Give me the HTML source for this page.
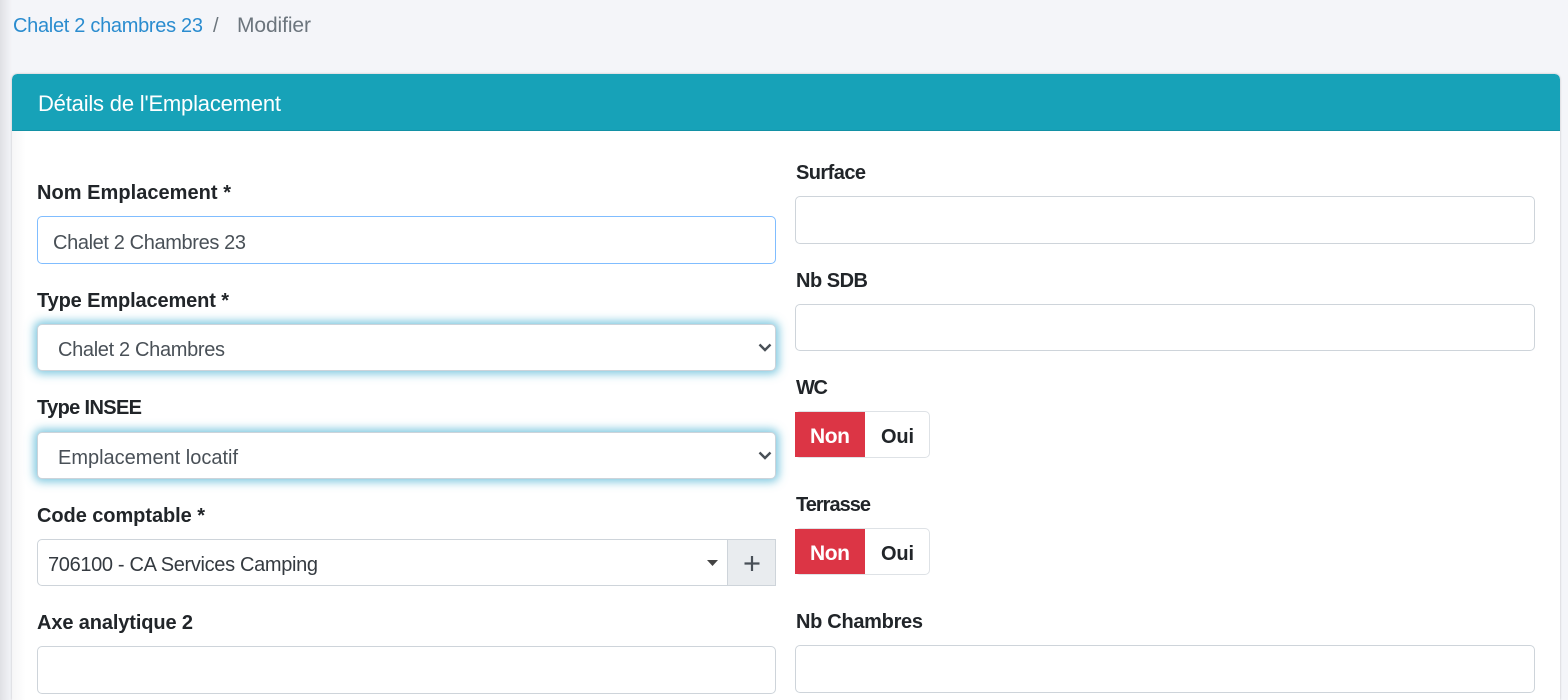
<!DOCTYPE html>
<html lang="fr">
<head>
<meta charset="utf-8">
<title>Modifier</title>
<style>
html,body{margin:0;padding:0;width:1568px;height:700px;overflow:hidden;background:#f4f5f9;font-family:"Liberation Sans",sans-serif}
body{position:relative}
.abs,.in{position:absolute;box-sizing:border-box}
.shadow{position:absolute;left:0;top:0;width:12px;height:700px;background:linear-gradient(to right,#dfe0e4,#e6e7eb 30%,#f4f5f9)}
.card{position:absolute;left:12px;top:74px;width:1548px;height:626px;background:#fff;border-radius:5px 5px 0 0;box-shadow:0 0 2px rgba(0,0,0,.22);overflow:hidden}
.cardfade{position:absolute;left:0;top:57px;width:14px;height:569px;background:linear-gradient(to right,#f6f6f7,#fff)}
.head{position:absolute;left:0;top:0;width:1548px;height:57px;background:#17a2b8;border-bottom:1px solid #1391a5;border-radius:5px 5px 0 0;box-sizing:border-box}
.in{background:#fff;border:1px solid #ced4da;border-radius:5px}
.blue{border-color:#80bdff}
.glow{border-color:#ccd3da;box-shadow:0 0 9px 3px rgba(70,175,210,.68)}
.non{position:absolute;background:#dc3545;width:70px;height:45px}
svg.t{position:absolute;left:0;top:0}
text{font-family:"Liberation Sans",sans-serif}
.b{font-weight:700;font-size:20px;fill:#212529}
.v{font-size:20px;fill:#495057}
</style>
</head>
<body>
<div class="shadow"></div>
<div class="card"><div class="cardfade"></div><div class="head"></div></div>

<div class="in blue" style="left:37px;top:216px;width:739px;height:48px"></div>
<div class="in glow" style="left:37px;top:324px;width:739px;height:47px"></div>
<div class="in glow" style="left:37px;top:432px;width:739px;height:47px"></div>
<div class="in" style="left:37px;top:539px;width:691px;height:47px;border-radius:5px 0 0 5px"></div>
<div class="in" style="left:727px;top:539px;width:49px;height:47px;border-radius:0;background:#e9ecef"></div>
<div class="in" style="left:37px;top:646px;width:739px;height:48px"></div>

<div class="in" style="left:795px;top:196px;width:740px;height:48px"></div>
<div class="in" style="left:795px;top:304px;width:740px;height:47px"></div>
<div class="in" style="left:795px;top:645px;width:740px;height:48px"></div>

<div class="in" style="left:795px;top:411px;width:135px;height:47px;border-color:#dee2e6"></div>
<div class="non" style="left:795px;top:412px"></div>
<div class="in" style="left:795px;top:528px;width:135px;height:47px;border-color:#dee2e6"></div>
<div class="non" style="left:795px;top:529px"></div>

<svg class="t" width="1568" height="700" viewBox="0 0 1568 700" xmlns="http://www.w3.org/2000/svg">
<text x="13" y="32" font-size="20" fill="#2a8ccf" textLength="190" lengthAdjust="spacing">Chalet 2 chambres 23</text>
<text x="213" y="32" font-size="20" fill="#6c757d">/</text>
<text x="237" y="32" font-size="21" fill="#6c757d" textLength="74" lengthAdjust="spacing">Modifier</text>
<text x="38" y="111" font-size="22" fill="#fff" textLength="243" lengthAdjust="spacing">Détails de l'Emplacement</text>

<text class="b" x="37" y="199" textLength="194" lengthAdjust="spacing">Nom Emplacement *</text>
<text class="v" x="53" y="249" textLength="193" lengthAdjust="spacing">Chalet 2 Chambres 23</text>
<text class="b" x="37" y="307" textLength="192" lengthAdjust="spacing">Type Emplacement *</text>
<text class="v" x="58" y="356" textLength="167" lengthAdjust="spacing">Chalet 2 Chambres</text>
<text class="b" x="37" y="414" textLength="105" lengthAdjust="spacing">Type INSEE</text>
<text class="v" x="58" y="464" textLength="180" lengthAdjust="spacing">Emplacement locatif</text>
<text class="b" x="37" y="522" textLength="168" lengthAdjust="spacing">Code comptable *</text>
<text x="48" y="571" font-size="20" fill="#343a40" textLength="270" lengthAdjust="spacing">706100 - CA Services Camping</text>
<text class="b" x="37" y="629" textLength="156" lengthAdjust="spacing">Axe analytique 2</text>

<text class="b" x="796" y="179" textLength="70" lengthAdjust="spacing">Surface</text>
<text class="b" x="796" y="287" textLength="72" lengthAdjust="spacing">Nb SDB</text>
<text class="b" x="796" y="394" textLength="32" lengthAdjust="spacing">WC</text>
<text x="810" y="443" font-size="21" font-weight="700" fill="#fff" textLength="40" lengthAdjust="spacing">Non</text>
<text class="b" x="881" y="443" textLength="33" lengthAdjust="spacing">Oui</text>
<text class="b" x="796" y="511" textLength="75" lengthAdjust="spacing">Terrasse</text>
<text x="810" y="560" font-size="21" font-weight="700" fill="#fff" textLength="40" lengthAdjust="spacing">Non</text>
<text class="b" x="881" y="560" textLength="33" lengthAdjust="spacing">Oui</text>
<text class="b" x="796" y="628" textLength="127" lengthAdjust="spacing">Nb Chambres</text>

<path d="M759.500 344.500l5.500 5.500 5.500-5.500" fill="none" stroke="#495057" stroke-width="2.400"/>
<path d="M759.500 452.500l5.500 5.500 5.500-5.500" fill="none" stroke="#495057" stroke-width="2.400"/>
<path d="M707 560h11l-5.500 6z" fill="#444"/>
<path d="M752 556v15M744.500 563.500h15" fill="none" stroke="#495057" stroke-width="2.200"/>
</svg>
</body>
</html>
